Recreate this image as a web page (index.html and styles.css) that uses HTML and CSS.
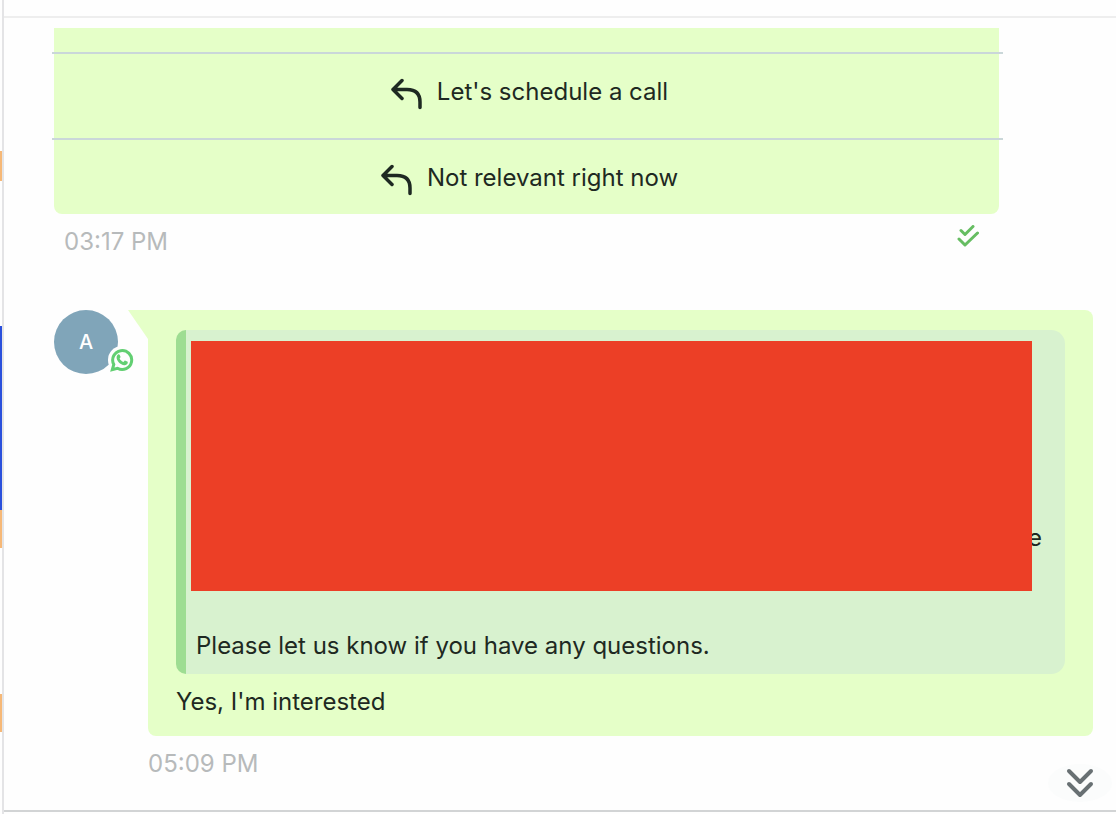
FILE: index.html
```html
<!DOCTYPE html>
<html lang="en">
<head>
<meta charset="utf-8">
<title>Conversation</title>
<link rel="stylesheet" href="styles.css">
</head>
<body>
<div class="app">
  <aside class="rail">
    <span class="mark mark-first"></span>
    <span class="mark mark-active"></span>
    <span class="mark mark-next"></span>
    <span class="mark mark-last"></span>
  </aside>
  <main class="chat">
    <header class="chat-head"></header>
    <section class="thread">
      <article class="message outgoing">
        <div class="template">
          <div class="template-end"></div>
          <button class="reply" type="button">
            <svg class="reply-icon" viewBox="0 0 32 32" aria-hidden="true"><path d="M11 2.500L2 11.500L11 20.500M2.500 11.500H16C25 11.500 29 16 29 24V29.500"/></svg>
            <span>Let's schedule a call</span>
          </button>
          <button class="reply" type="button">
            <svg class="reply-icon" viewBox="0 0 32 32" aria-hidden="true"><path d="M11 2.500L2 11.500L11 20.500M2.500 11.500H16C25 11.500 29 16 29 24V29.500"/></svg>
            <span>Not relevant right now</span>
          </button>
        </div>
        <footer class="meta">
          <time>03:17 PM</time>
          <svg class="read-icon" viewBox="0 0 22 22" aria-label="Read"><path d="M4 5.500L8 9.500L16 1.500M2 14L8 20L20.500 8"/></svg>
        </footer>
      </article>
      <article class="message incoming">
        <div class="avatar">A
          <span class="channel">
            <svg viewBox="0 0 24 24" aria-label="WhatsApp"><path class="ring" d="M2.300 21.700L3.800 16.500A9.500 9.500 0 1 1 7.500 20.300Z"/><path class="phone" d="M8 6.500C8.500 6 9.300 6.100 9.600 6.700L10.400 8.600C10.600 9 10.500 9.300 10.200 9.700L9.600 10.400C10.400 12 11.700 13.200 13.500 14L14.400 12.900C14.700 12.600 15 12.500 15.400 12.700L17.300 13.600C17.800 13.900 17.900 14.300 17.700 15C17.300 16.400 16 17.300 14.400 17.200C10.300 16.900 6.500 12.800 6.600 9.500C6.600 8.200 7.200 7.100 8 6.500Z"/></svg>
          </span>
        </div>
        <div class="body">
          <div class="bubble">
            <blockquote class="quote">
              <p class="quote-tail">e</p>
              <p class="quote-close">Please let us know if you have any questions.</p>
              <div class="redaction"></div>
            </blockquote>
            <p class="text">Yes, I'm interested</p>
          </div>
          <time class="sent">05:09 PM</time>
        </div>
      </article>
      <button class="to-bottom" type="button" aria-label="Scroll to latest">
        <svg viewBox="0 0 28 30" aria-hidden="true"><path d="M3 3L14 14L25 3M3 16L14 27L25 16"/></svg>
      </button>
    </section>
    <footer class="composer"></footer>
  </main>
</div>
</body>
</html>
```
FILE: styles.css
```css
* {
  box-sizing: border-box;
}

body {
  margin: 0;
  background: #fefefe;
  color: #1e2922;
  font: 24px/36px Inter, sans-serif;
}

p,
blockquote {
  margin: 0;
}

.app {
  display: flex;
  min-height: 100vh;
}

.rail {
  display: flex;
  flex-direction: column;
  flex: none;
  width: 4px;
  border-right: 2px solid #e4e4e6;
}

.mark {
  height: 38px;
  background: #f6b877;
}

.mark-first {
  height: 30px;
  margin-top: 151px;
}

.mark-active {
  height: 184px;
  margin-top: 145px;
  background: #2b50dc;
}

.mark-last {
  margin-top: 146px;
}

.chat {
  display: flex;
  flex: 1;
  flex-direction: column;
  min-width: 0;
}

.chat-head {
  height: 18px;
  border-bottom: 2px solid #eeeeee;
}

.thread {
  position: relative;
  flex: 1;
  padding: 10px 23px 28px 50px;
}

.outgoing {
  margin-right: 94px;
}

.template {
  border-radius: 0 0 8px 8px;
  background: #e5ffc8;
}

.template-end {
  height: 24px;
}

.reply {
  display: flex;
  align-items: center;
  justify-content: center;
  gap: 14px;
  width: calc(100% + 6px);
  height: 86px;
  margin: 0 -4px 0 -2px;
  padding: 0 0 8px 4px;
  border: 0;
  border-top: 2px solid #cad7d9;
  background: none;
  color: inherit;
  font: inherit;
}

.reply:last-child {
  height: 76px;
  padding: 2px 0 0 4px;
}

.reply-icon {
  width: 32px;
  height: 32px;
  margin-top: 4px;
  fill: none;
  stroke: #1e2922;
  stroke-width: 3.5;
  stroke-linecap: round;
  stroke-linejoin: round;
}

.meta {
  display: flex;
  justify-content: space-between;
  padding: 10px 20px 0 10px;
}

time {
  color: #b7babb;
}

.read-icon {
  width: 22px;
  height: 22px;
  margin-top: 1px;
  fill: none;
  stroke: #66bd62;
  stroke-width: 3;
  stroke-linecap: round;
  stroke-linejoin: round;
}

.incoming {
  display: flex;
  gap: 30px;
  margin-top: 50px;
}

.avatar {
  position: relative;
  flex: none;
  width: 64px;
  height: 64px;
  border-radius: 50%;
  background: #80a5b9;
  color: #ffffff;
  font-size: 20px;
  font-weight: 500;
  line-height: 64px;
  text-align: center;
}

.channel {
  position: absolute;
  right: -18px;
  bottom: 0;
  display: grid;
  place-items: center;
  width: 28px;
  height: 28px;
  border-radius: 50%;
  background: #fefefe;
}

.channel svg {
  width: 24px;
  height: 24px;
}

.ring {
  fill: none;
  stroke: #62cf72;
  stroke-width: 3;
}

.phone {
  fill: #62cf72;
}

.body {
  flex: 1;
  min-width: 0;
}

.bubble {
  position: relative;
  padding: 20px 28px 16px;
  border-radius: 0 8px 8px 8px;
  background: #e5ffc8;
}

.bubble::before {
  content: "";
  position: absolute;
  top: 0;
  right: 100%;
  width: 20px;
  height: 29px;
  background: #e5ffc8;
  clip-path: polygon(0 0, 100% 0, 100% 100%);
}

.quote {
  position: relative;
  padding: 10px 23px 10px 10px;
  border-left: 10px solid #9edd92;
  border-radius: 10px 14px 14px 10px;
  background: #d8f2cf;
}

.quote-tail {
  margin-top: 180px;
  text-align: right;
}

.quote-close {
  margin-top: 72px;
}

.redaction {
  position: absolute;
  top: 11px;
  right: 33px;
  left: 5px;
  height: 250px;
  background: #ec3f26;
}

.text {
  margin-top: 10px;
}

.sent {
  display: block;
  margin-top: 10px;
}

.to-bottom {
  position: absolute;
  right: 4px;
  bottom: 8px;
  display: grid;
  place-items: center;
  width: 64px;
  height: 38px;
  padding: 0;
  border: 0;
  border-radius: 50%;
  background: #fbfcfc;
}

.to-bottom svg {
  width: 28px;
  height: 30px;
  fill: none;
  stroke: #687073;
  stroke-width: 4;
  stroke-linecap: round;
  stroke-linejoin: round;
}

.composer {
  height: 4px;
  border-top: 2px solid #d2d4d5;
}
```
